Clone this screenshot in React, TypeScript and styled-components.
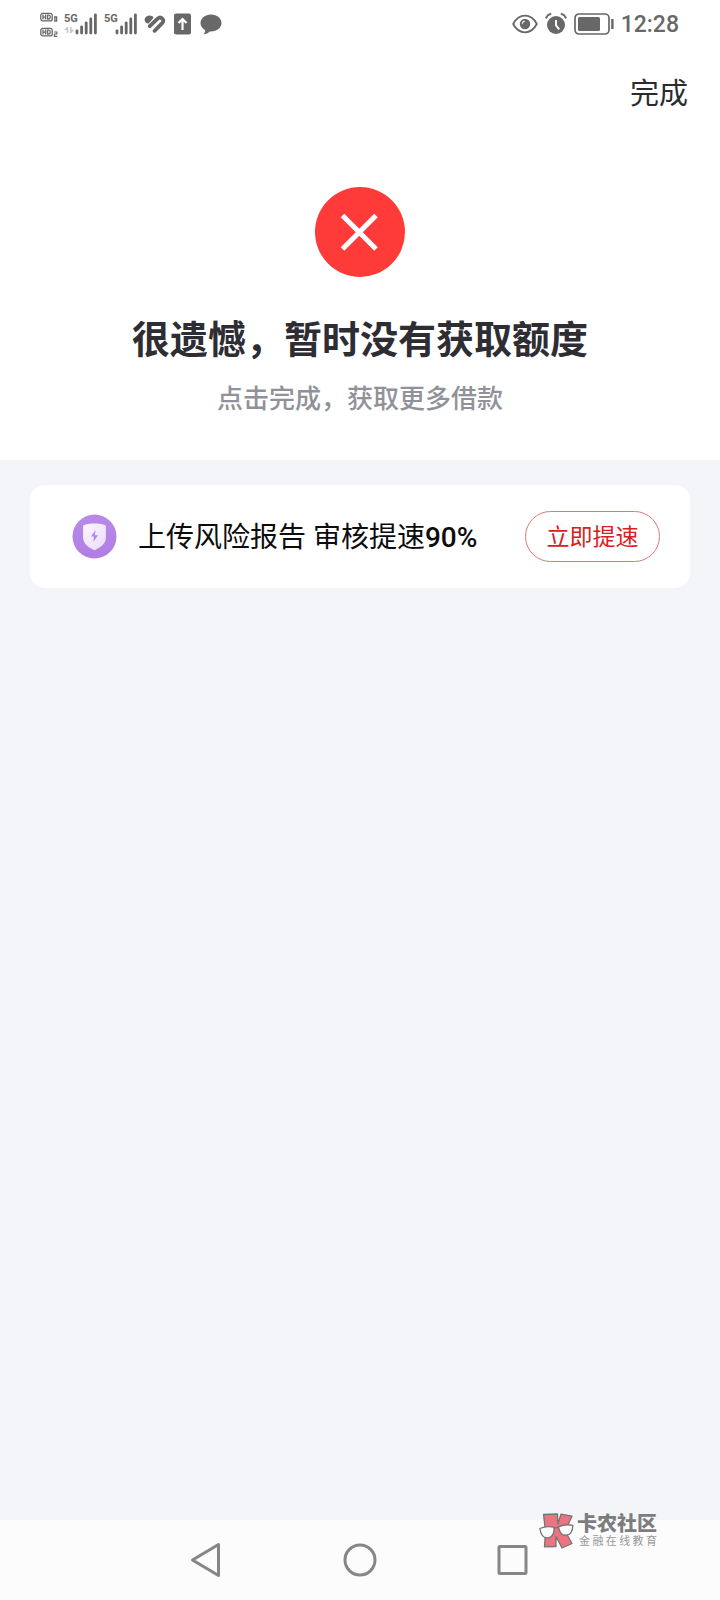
import React from "react";
import styled, { createGlobalStyle } from "styled-components";

const GlobalStyle = createGlobalStyle`
  *, *::before, *::after { box-sizing: border-box; }
  body {
    margin: 0;
    background: #f3f5f9;
    font-family: Roboto, "Noto Sans CJK SC", sans-serif;
  }
  button { font-family: inherit; cursor: pointer; }
`;

const INK = "#686868";

const Screen = styled.div`
  position: relative;
  display: flex;
  flex-direction: column;
  min-height: 100vh;
`;

const Header = styled.header`
  background: #fff;
`;

const StatusBar = styled.div`
  display: flex;
  align-items: center;
  justify-content: space-between;
  height: 48px;
  padding: 0 41px 0 40px;
  color: ${INK};
`;

const StatusGroup = styled.div<{ $gap: number }>`
  display: flex;
  align-items: center;
  gap: ${(p) => p.$gap}px;

  svg { display: block; flex: none; }
`;

const Clock = styled.time`
  font-size: 23px;
  font-weight: 500;
  line-height: 24px;
  padding-top: 2px;
`;

const TitleBar = styled.nav`
  display: flex;
  justify-content: flex-end;
  align-items: center;
  height: 92px;
  padding: 0 32px;
`;

const DoneButton = styled.button`
  padding: 0;
  border: 0;
  background: none;
  color: #2b2b30;
  font-size: 29px;
  line-height: 40px;
`;

const Result = styled.section`
  display: flex;
  flex-direction: column;
  align-items: center;
  padding: 46px 24px 42px;
  text-align: center;
`;

const ResultTitle = styled.h1`
  margin: 36px 0 0;
  color: #2d2d33;
  font-size: 38px;
  font-weight: 700;
  line-height: 52px;
`;

const ResultHint = styled.p`
  margin: 14px 0 0;
  color: #919299;
  font-size: 26px;
  font-weight: 500;
  line-height: 38px;
`;

const Main = styled.main`
  flex: 1;
  padding: 25px 30px;
`;

const OfferCard = styled.section`
  display: flex;
  align-items: center;
  min-height: 103px;
  padding: 0 30px 0 42px;
  border-radius: 15px;
  background: #fff;

  svg { flex: none; }
`;

const OfferText = styled.p`
  flex: 1;
  margin: 0 0 0 21px;
  padding-top: 2px;
  color: #0c0c0c;
  font-size: 28px;
  line-height: 40px;
`;

const Percent = styled.span`
  font-weight: 500;
`;

const OfferButton = styled.button`
  width: 135px;
  height: 51px;
  padding: 2px 0 0;
  border: 1px solid #d97a7a;
  border-radius: 26px;
  background: #fff;
  color: #d9201f;
  font-size: 23px;
  line-height: 32px;
`;

const SystemNav = styled.nav`
  display: grid;
  grid-template-columns: repeat(3, 1fr);
  height: 80px;
  padding: 0 18%;
  background: #fcfcfc;
`;

const NavKey = styled.button`
  display: flex;
  align-items: center;
  justify-content: center;
  padding: 0;
  border: 0;
  background: none;
`;

const Watermark = styled.div`
  position: absolute;
  right: 63px;
  bottom: 51px;
  display: flex;
  align-items: center;
  gap: 3px;
`;

const WatermarkText = styled.div`
  width: 80px;
  color: #7d7d7f;
`;

const WatermarkName = styled.div`
  font-size: 20px;
  font-weight: 900;
  line-height: 22px;
`;

const WatermarkTag = styled.div`
  padding-left: 2px;
  color: #98989b;
  font-size: 11px;
  line-height: 14px;
  text-align: justify;
  text-align-last: justify;
`;

const BAR_TOPS = [17, 13, 9, 5, 1];

const HdBadges = () => (
  <svg width="18" height="26" viewBox="0 0 18 26" fill="none" role="img" aria-label="HD">
    {[1, 16].map((y, i) => (
      <g key={y} transform={`translate(0 ${y})`}>
        <rect x="0.8" y="1.300" width="11.400" height="7.600" rx="2" stroke={INK} strokeWidth="1.300" />
        <path d="M3 2.600v5M5.600 2.600v5M3 5.100h2.600M7.600 3.200v3.800h1.200c2 0 2-3.800 0-3.800z" stroke={INK} strokeWidth="1.300" />
        {i === 0 ? (
          <path d="M14.800 9.200V5h1.800v4.200z" stroke={INK} strokeWidth="1.300" />
        ) : (
          <path d="M14 5h2.800v2h-2.400v2.400h2.800" stroke={INK} strokeWidth="1.200" />
        )}
      </g>
    ))}
  </svg>
);

const Signal = ({ data }: { data?: boolean }) => (
  <svg width="34" height="22" viewBox="0 0 34 22" role="img" aria-label="5G">
    <text x="0" y="9" fill={INK} fontFamily="Roboto, sans-serif" fontSize="11" fontWeight="700">
      5G
    </text>
    {data && (
      <path d="M3.500 20v-6M1 17l2.500-2.500M6.800 14v6M9.300 17l-2.500 2.500" stroke="#c4c4c4" strokeWidth="1.500" fill="none" />
    )}
    {BAR_TOPS.map((top, i) => (
      <path key={top} d={`M${13 + i * 4.6} ${top + 0.8}V20`} stroke={INK} strokeWidth="2.800" strokeLinecap="round" />
    ))}
  </svg>
);

const HeartIcon = () => (
  <svg width="22" height="20" viewBox="0 0 22 20" fill="none" stroke={INK} strokeLinecap="round" strokeLinejoin="round">
    <path d="M2.800 7.400C1 4.800 4.600 1.800 7.600 3.700L3.800 7.900z" fill={INK} strokeWidth="3.200" />
    <path d="M5.800 12.200L13.600 4.600C17 1.800 21 6 18.200 9.200L10.600 16.800" strokeWidth="3.800" />
  </svg>
);

const UploadIcon = () => (
  <svg width="18" height="22" viewBox="0 0 18 22" fill="none">
    <rect x="0" y="0.500" width="17" height="21" rx="2" fill={INK} />
    <path d="M8.500 17V6.500M4.500 10l4-4 4 4" stroke="#fff" strokeWidth="2.200" />
  </svg>
);

const BubbleIcon = () => (
  <svg width="22" height="21" viewBox="0 0 22 21">
    <path d="M11 0.500C5 0.500 0.500 4.200 0.500 9c0 3 1.800 5.600 4.600 7 .2 1.600-.4 3-1.500 4.200 2.500-.1 4.800-1 6.200-2.700h1.200c6 0 10.500-3.700 10.500-8.500S17 .5 11 .5z" fill={INK} />
  </svg>
);

const EyeIcon = () => (
  <svg width="26" height="20" viewBox="0 0 26 20" fill="none">
    <path d="M1.200 10C4 4.500 8 1.700 13 1.700S22 4.500 24.800 10C22 15.500 18 18.300 13 18.300S4 15.500 1.200 10z" stroke={INK} strokeWidth="1.800" />
    <circle cx="13" cy="10" r="5.200" fill={INK} />
    <path d="M10.200 9.600c.2-1.500 1.100-2.400 2.600-2.600" stroke="#fff" strokeWidth="1.200" />
  </svg>
);

const AlarmIcon = () => (
  <svg width="22" height="22" viewBox="0 0 22 22" fill="none">
    <circle cx="11" cy="12" r="9" fill={INK} />
    <path d="M1.200 4.600C2 2.800 3.400 1.500 5.400 1M20.800 4.600C20 2.800 18.600 1.500 16.600 1" stroke={INK} strokeWidth="2" strokeLinecap="round" />
    <path d="M11 7v5.400l3.200 4" stroke="#fff" strokeWidth="1.900" />
  </svg>
);

const BatteryIcon = () => (
  <svg width="40" height="22" viewBox="0 0 40 22" fill="none">
    <rect x="1" y="1" width="34" height="20" rx="4" stroke={INK} strokeWidth="1.700" />
    <rect x="4" y="4" width="22" height="14" rx="1.500" fill={INK} />
    <path d="M38.400 6v10" stroke={INK} strokeWidth="2.400" />
  </svg>
);

const FailIcon = () => (
  <svg width="92" height="92" viewBox="0 0 92 92" fill="none" role="img" aria-label="失败">
    <circle cx="46" cy="46" r="45" fill="#ff3b3a" />
    <path d="M28.500 29.500L62 63M62 29.500L28.500 63" stroke="#fff" strokeWidth="5" />
  </svg>
);

const ShieldIcon = () => (
  <svg width="45" height="45" viewBox="0 0 45 45" aria-hidden="true">
    <defs>
      <linearGradient id="badge" x1="0" y1="0" x2="0" y2="1">
        <stop offset="0" stopColor="#b78ae8" />
        <stop offset="1" stopColor="#b27de4" />
      </linearGradient>
      <linearGradient id="shield" x1="0" y1="0" x2="1" y2="1">
        <stop offset="0" stopColor="#fbf4ff" />
        <stop offset="1" stopColor="#ecdcfb" />
      </linearGradient>
    </defs>
    <circle cx="22.500" cy="22.500" r="22" fill="url(#badge)" />
    <path d="M22.500 9.500c3.400 0 7 .5 10.200 1.400.8.200 1.200.6 1.200 1.400v11c0 6-4.800 10-11.400 13-6.600-3-11.400-7-11.400-13v-11c0-.8.4-1.200 1.200-1.400 3.200-.9 6.800-1.400 10.200-1.400z" fill="url(#shield)" />
    <path d="M23.600 16l-4.600 6.600h3l-.8 5.400 4.800-6.800h-3.200z" fill="#b483e6" />
  </svg>
);

const MascotIcon = () => (
  <svg width="35" height="36" viewBox="0 0 35 36" stroke="#777477" strokeLinejoin="round">
    <path d="M4.500 1.500L18.500 1l.3 10L22 1.200l11 2L26 18l7 12.500-10 4.500-6-11.500v10l-11.500.3L6.500 18z" fill="#ec7480" strokeWidth="1.300" />
    <path d="M0.800 15.500c4-1.800 9.600-2.300 14.200-1.300.4 6-1.800 10-5.800 10.600-4.200.6-7.400-3-8.400-9.300z" fill="#fcfcfd" strokeWidth="1.300" />
    <path d="M19.500 13.800c4.400-2 9.400-2.600 14.300-1.400-.2 5.600-2.400 9.200-6.200 9.800-4.200.4-7.200-2.800-8.100-8.400z" fill="#fcfcfd" strokeWidth="1.300" />
    <path d="M15 15.200l4.500-.8" fill="none" strokeWidth="1.300" />
  </svg>
);

const KEY = { fill: "none", stroke: "#868686", strokeWidth: 3, strokeLinejoin: "round" as const };

export default function App() {
  return (
    <Screen>
      <GlobalStyle />
      <Header>
        <StatusBar>
          <StatusGroup $gap={6}>
            <HdBadges />
            <Signal data />
            <Signal />
            <StatusGroup $gap={8}>
              <HeartIcon />
              <UploadIcon />
              <BubbleIcon />
            </StatusGroup>
          </StatusGroup>
          <StatusGroup $gap={7}>
            <EyeIcon />
            <AlarmIcon />
            <BatteryIcon />
            <Clock>12:28</Clock>
          </StatusGroup>
        </StatusBar>
        <TitleBar>
          <DoneButton type="button">完成</DoneButton>
        </TitleBar>
        <Result>
          <FailIcon />
          <ResultTitle>很遗憾，暂时没有获取额度</ResultTitle>
          <ResultHint>点击完成，获取更多借款</ResultHint>
        </Result>
      </Header>
      <Main>
        <OfferCard>
          <ShieldIcon />
          <OfferText>
            上传风险报告 审核提速<Percent>90%</Percent>
          </OfferText>
          <OfferButton type="button">立即提速</OfferButton>
        </OfferCard>
      </Main>
      <SystemNav>
        <NavKey type="button" aria-label="返回">
          <svg width="36" height="36" viewBox="0 0 36 36" {...KEY}>
            <path d="M30.500 2.500v31L4.500 18z" />
          </svg>
        </NavKey>
        <NavKey type="button" aria-label="主页">
          <svg width="36" height="36" viewBox="0 0 36 36" {...KEY}>
            <circle cx="18" cy="18" r="15" />
          </svg>
        </NavKey>
        <NavKey type="button" aria-label="最近任务">
          <svg width="36" height="36" viewBox="0 0 36 36" {...KEY}>
            <rect x="3" y="4.500" width="27" height="27" rx="1" />
          </svg>
        </NavKey>
      </SystemNav>
      <Watermark>
        <MascotIcon />
        <WatermarkText>
          <WatermarkName>卡农社区</WatermarkName>
          <WatermarkTag>金融在线教育</WatermarkTag>
        </WatermarkText>
      </Watermark>
    </Screen>
  );
}
